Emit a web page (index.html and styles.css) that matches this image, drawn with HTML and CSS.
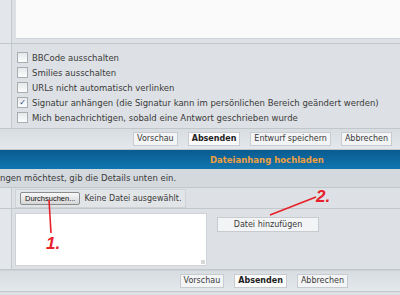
FILE: index.html
```html
<!DOCTYPE html>
<html lang="de">
<head>
    <meta charset="UTF-8">
    <title>Beitrag schreiben</title>
    <link rel="stylesheet" href="styles.css">
</head>
<body>
    <div class="post">
        <div class="row row-text">
            <div class="side"></div>
            <div class="main">
                <div class="message"></div>
            </div>
        </div>
        <div class="row row-options">
            <div class="side"></div>
            <div class="main options">
                <label class="opt"><span class="box"></span>BBCode ausschalten</label>
                <label class="opt"><span class="box"></span>Smilies ausschalten</label>
                <label class="opt"><span class="box"></span>URLs nicht automatisch verlinken</label>
                <label class="opt"><span class="box checked">&#10003;</span>Signatur anhängen (die Signatur kann im persönlichen Bereich geändert werden)</label>
                <label class="opt"><span class="box"></span>Mich benachrichtigen, sobald eine Antwort geschrieben wurde</label>
            </div>
        </div>
        <div class="buttons buttons-top">
            <button class="btn">Vorschau</button>
            <button class="btn btn-main">Absenden</button>
            <button class="btn">Entwurf speichern</button>
            <button class="btn">Abbrechen</button>
        </div>

        <div class="panel-head">Dateianhang hochladen</div>
        <div class="panel-info">ngen möchtest, gib die Details unten ein.</div>
        <div class="row row-file">
            <div class="side"></div>
            <div class="main">
                <div class="file">
                    <button class="browse">Durchsuchen...</button>
                    <span>Keine Datei ausgewählt.</span>
                </div>
            </div>
        </div>
        <div class="row row-comment">
            <div class="side"></div>
            <div class="main comment">
                <div class="comment-box"><span class="grip"></span></div>
                <button class="btn btn-add">Datei hinzufügen</button>
            </div>
        </div>
        <div class="buttons buttons-bottom">
            <button class="btn">Vorschau</button>
            <button class="btn btn-main">Absenden</button>
            <button class="btn">Abbrechen</button>
        </div>
        <div class="foot"></div>

        <!-- rote Markierungen -->
        <svg class="marks" width="400" height="295" viewBox="0 0 400 295">
            <path d="M49 200 Q50 216 51 233" stroke="#e8202a" stroke-width="1.6" fill="none"/>
            <path d="M270 215 L316 197" stroke="#e8202a" stroke-width="1.6" fill="none"/>
        </svg>
        <span class="num num-1">1.</span>
        <span class="num num-2">2.</span>
    </div>
</body>
</html>
```

FILE: styles.css
```css
html, body {
    margin: 0;
    padding: 0;
}
body {
    font-family: "DejaVu Sans", Verdana, sans-serif;
    font-size: 8.5px;
    color: #3a3a3a;
    background: #dde1e5;
}
.post {
    position: relative;
    width: 400px;
    height: 295px;
    overflow: hidden;
}
.row {
    display: flex;
    border-bottom: 1px solid #c2c7cc;
}
.side {
    width: 11px;
    flex: none;
    background: #e3e6ea;
    border-right: 1px solid #c4c9ce;
}
.main {
    flex: 1;
    padding-left: 4px;
}
.row-text {
    height: 43px;
}
.message {
    height: 38px;
    background: #fafafa;
    border-bottom: 1px solid #d0d4d8;
}
.options {
    padding-top: 6px;
    height: 78px;
}
.opt {
    display: flex;
    align-items: center;
    height: 15px;
    padding-left: 1px;
}
.box {
    width: 9px;
    height: 9px;
    margin-right: 4px;
    border: 1px solid #a8adb2;
    background: linear-gradient(#e6e8ea, #fdfdfd);
    font-size: 8px;
    line-height: 9px;
    text-align: center;
    color: #2a3d8f;
}
.buttons {
    display: flex;
    justify-content: flex-end;
    gap: 10px;
    align-items: center;
    background: linear-gradient(#d8dde2, #e4e8ec);
    border-bottom: 1px solid #c2c7cc;
}
.buttons-top {
    padding-right: 8px;
    height: 20px;
}
.buttons-bottom {
    padding-right: 52px;
    height: 20px;
    border-top: 1px solid #cdd2d6;
}
.btn {
    font-family: inherit;
    font-size: 8px;
    color: #3a3a3a;
    height: 14px;
    padding: 0 3px;
    border: 1px solid #c8ccd0;
    background: #f3f4f5;
    line-height: 12px;
}
.btn-main {
    font-weight: bold;
    color: #222;
    background: #fbfbfb;
}
.panel-head {
    height: 19px;
    background: linear-gradient(#0a5b8f, #0f76b0);
    color: #f0a040;
    font-weight: bold;
    line-height: 20px;
    padding-left: 210px;
}
.panel-info {
    height: 18px;
    line-height: 18px;
    background: #d4d9de;
    border-bottom: 1px solid #c2c7cc;
}
.row-file {
    height: 20px;
}
.row-file .main {
    padding-left: 3px;
    display: flex;
    align-items: center;
}
.file {
    display: flex;
    align-items: center;
    gap: 4px;
    padding: 2px 4px;
    background: #e2e5e8;
    border: 1px solid #cfd3d7;
    font-size: 8px;
}
.browse {
    font-family: "Liberation Sans", Arial, sans-serif;
    font-size: 7.5px;
    height: 13px;
    padding: 0 4px;
    border: 1px solid #8a8d90;
    border-radius: 2px;
    background: linear-gradient(#f8f8f8, #d6d6d6);
    color: #111;
}
.row-comment {
    height: 60px;
}
.comment {
    display: flex;
    align-items: flex-start;
    padding-left: 3px;
    padding-top: 4px;
}
.comment-box {
    position: relative;
    width: 190px;
    height: 51px;
    background: #fff;
    border: 1px solid #cfd3d7;
}
.grip {
    position: absolute;
    right: 1px;
    bottom: 1px;
    width: 4px;
    height: 4px;
    background: radial-gradient(#aaa 0.6px, transparent 0.8px) 0 0 / 2px 2px;
}
.btn-add {
    margin-left: 10px;
    margin-top: 4px;
    width: 102px;
    height: 15px;
}
.foot {
    height: 20px;
}
.marks {
    position: absolute;
    left: 0;
    top: 0;
}
.num {
    position: absolute;
    font-family: "Liberation Sans", Arial, sans-serif;
    font-weight: bold;
    font-style: italic;
    font-size: 17px;
    line-height: 17px;
    color: #e8202a;
}
.num-1 {
    left: 46px;
    top: 235px;
}
.num-2 {
    left: 316px;
    top: 188px;
}
```
